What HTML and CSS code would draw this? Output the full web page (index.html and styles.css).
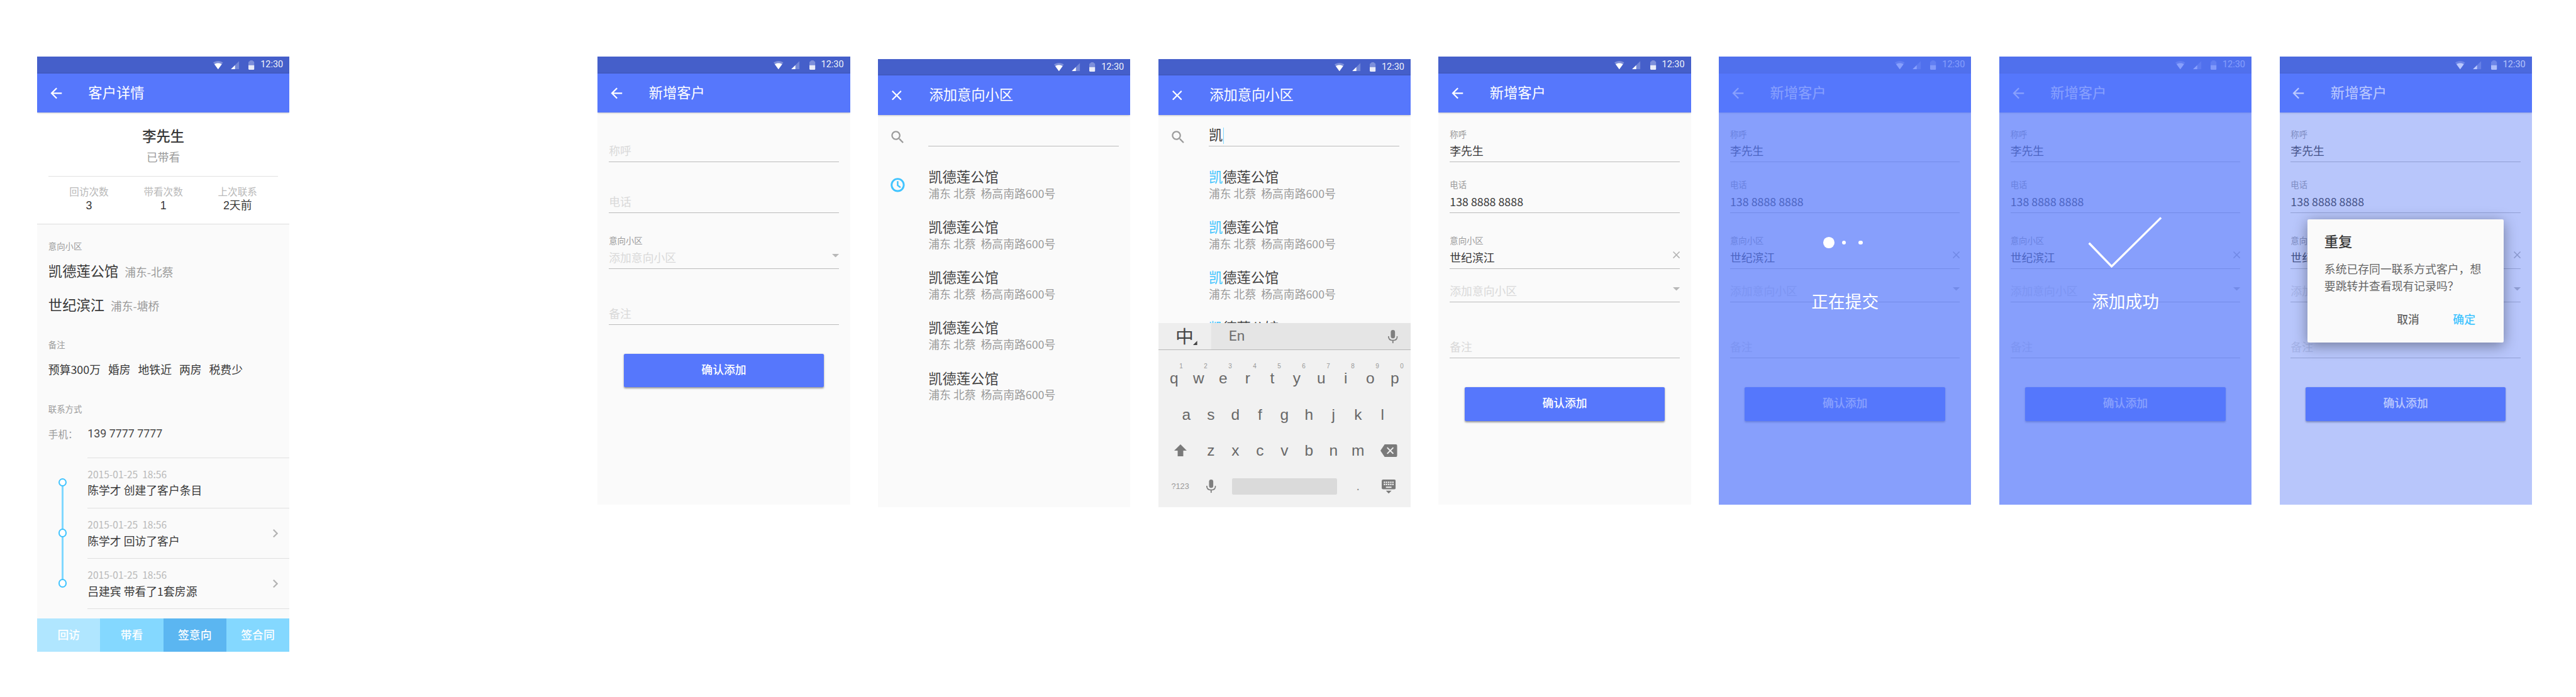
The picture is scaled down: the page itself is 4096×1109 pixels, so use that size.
FILE: index.html
```html
<!DOCTYPE html>
<html lang="zh-CN">
<head>
<meta charset="utf-8">
<title>客户管理</title>
<link rel="stylesheet" href="styles.css">
</head>
<body>
<svg class="defs" aria-hidden="true">
  <symbol id="wifi" viewBox="0 0 28 24"><path d="M14 24 0 4.5C8-1.5 20-1.5 28 4.5Z" opacity=".3"/><path d="M14 24 3.5 9.5C9 5.5 19 5.5 24.5 9.5Z"/></symbol>
  <symbol id="signal" viewBox="0 0 24 24"><path d="M0 24 24 0V24Z" opacity=".25"/><path d="M0 24 12 12V24Z"/></symbol>
  <symbol id="battery" viewBox="0 0 17 27"><path d="M0 14V6Q0 3 3 2.500L5 .5Q8.500-.5 12 .5L14 2.500Q17 3 17 6V14Z" opacity=".3"/><path d="M0 14H17V24Q17 27 14 27H3Q0 27 0 24Z" opacity=".88"/></symbol>
  <symbol id="back" viewBox="0 0 24 24"><path d="M20 11H7.830l5.590-5.590L12 4l-8 8 8 8 1.410-1.410L7.830 13H20z"/></symbol>
  <symbol id="close" viewBox="5 5 14 14"><path d="M19 6.410 17.590 5 12 10.590 6.410 5 5 6.410 10.590 12 5 17.590 6.410 19 12 13.410 17.590 19 19 17.590 13.410 12z"/></symbol>
  <symbol id="chevron" viewBox="8.590 6 7.410 12"><path d="M10 6 8.590 7.410 13.170 12l-4.580 4.590L10 18l6-6z"/></symbol>
  <symbol id="search" viewBox="0 0 24 24"><path d="M15.500 14h-.79l-.28-.27C15.410 12.590 16 11.110 16 9.500 16 5.910 13.090 3 9.500 3S3 5.910 3 9.500 5.910 16 9.500 16c1.610 0 3.090-.59 4.230-1.570l.27.28v.79l5 4.990L20.490 19l-4.990-5zm-6 0C7.010 14 5 11.990 5 9.500S7.010 5 9.500 5 14 7.010 14 9.500 11.990 14 9.500 14z"/></symbol>
  <symbol id="clock" viewBox="0 0 24 24"><circle cx="12" cy="12" r="8.700" fill="none" stroke="currentColor" stroke-width="2.600"/><path d="M12 6.500V12.500L16 15.500" fill="none" stroke="currentColor" stroke-width="2.200"/></symbol>
  <symbol id="caret" viewBox="0 0 20 10"><path d="M0 0H20L10 10Z"/></symbol>
  <symbol id="mic" viewBox="0 0 28 38"><rect x="8" width="12" height="24" rx="6"/><path d="M1.500 18C1.500 26 6.500 30 14 30S26.500 26 26.500 18M14 30V38" fill="none" stroke="currentColor" stroke-width="3.200"/></symbol>
  <symbol id="shift" viewBox="0 0 36 34"><path d="M18 0 36 18H26V34H10V18H0Z"/></symbol>
  <symbol id="erase" viewBox="0 0 48 36"><path fill-rule="evenodd" d="M12 0H44Q48 0 48 4V32Q48 36 44 36H12L0 18ZM20.500 8 18 10.500 25.500 18 18 25.500 20.500 28 28 20.500 35.500 28 38 25.500 30.500 18 38 10.500 35.500 8 28 15.500Z"/></symbol>
  <symbol id="hide" viewBox="0 0 40 40"><path fill-rule="evenodd" d="M4 0H36Q40 0 40 4V24Q40 28 36 28H4Q0 28 0 24V4Q0 0 4 0ZM6 6V10H10V6ZM12 6V10H16V6ZM18 6V10H22V6ZM24 6V10H28V6ZM30 6V10H34V6ZM6 12V16H10V12ZM12 12V16H16V12ZM18 12V16H22V12ZM24 12V16H28V12ZM30 12V16H34V12ZM12 20V24H28V20Z"/><path d="M12 32H28L20 40Z"/></symbol>
</svg>

<main class="board">

  <section class="phone phone-detail">
    <div class="status"><svg class="i-wifi"><use href="#wifi"/></svg><svg class="i-signal"><use href="#signal"/></svg><svg class="i-battery"><use href="#battery"/></svg><span>12:30</span></div>
    <header class="appbar"><svg class="i-back"><use href="#back"/></svg><h1>客户详情</h1></header>
    <div class="summary">
      <h2>李先生</h2>
      <p class="state">已带看</p>
      <dl class="stats">
        <div><dt>回访次数</dt><dd>3</dd></div>
        <div><dt>带看次数</dt><dd>1</dd></div>
        <div><dt>上次联系</dt><dd>2天前</dd></div>
      </dl>
    </div>
    <div class="info">
      <h3>意向小区</h3>
      <p class="estate">凯德莲公馆  <small>浦东-北蔡</small></p>
      <p class="estate">世纪滨江  <small>浦东-塘桥</small></p>
      <h3 class="h-note">备注</h3>
      <p class="tags">预算300万   婚房   地铁近   两房   税费少</p>
      <h3 class="h-contact">联系方式</h3>
      <p class="contact"><span>手机：</span><b>139 7777 7777</b></p>
    </div>
    <ol class="timeline">
      <li><i class="node"></i><div class="event"><time>2015-01-25  18:56</time><p>陈学才 创建了客户条目</p></div></li>
      <li><i class="node"></i><div class="event"><time>2015-01-25  18:56</time><p>陈学才 回访了客户</p><svg class="i-chevron"><use href="#chevron"/></svg></div></li>
      <li><i class="node"></i><div class="event"><time>2015-01-25  18:56</time><p>吕建宾 带看了1套房源</p><svg class="i-chevron"><use href="#chevron"/></svg></div></li>
    </ol>
    <nav class="actions"><a class="a1">回访</a><a class="a2">带看</a><a class="a3">签意向</a><a class="a2">签合同</a></nav>
  </section>

  <section class="phone">
    <div class="status"><svg class="i-wifi"><use href="#wifi"/></svg><svg class="i-signal"><use href="#signal"/></svg><svg class="i-battery"><use href="#battery"/></svg><span>12:30</span></div>
    <header class="appbar"><svg class="i-back"><use href="#back"/></svg><h1>新增客户</h1></header>
    <form class="form">
      <div class="field first"><p class="hint">称呼</p></div>
      <div class="field"><p class="hint">电话</p></div>
      <div class="field tall"><label>意向小区</label><p class="hint">添加意向小区</p><svg class="i-caret"><use href="#caret"/></svg></div>
      <div class="field tall"><p class="hint">备注</p></div>
      <div class="submit">确认添加</div>
    </form>
  </section>

  <section class="phone lowered">
    <div class="status"><svg class="i-wifi"><use href="#wifi"/></svg><svg class="i-signal"><use href="#signal"/></svg><svg class="i-battery"><use href="#battery"/></svg><span>12:30</span></div>
    <header class="appbar"><svg class="i-close"><use href="#close"/></svg><h1>添加意向小区</h1></header>
    <div class="searchbar"><svg class="i-search"><use href="#search"/></svg><div class="query"></div></div>
    <div class="results">
      <svg class="i-clock"><use href="#clock"/></svg>
      <ul>
        <li><h4>凯德莲公馆</h4><p>浦东 北蔡  杨高南路600号</p></li>
        <li><h4>凯德莲公馆</h4><p>浦东 北蔡  杨高南路600号</p></li>
        <li><h4>凯德莲公馆</h4><p>浦东 北蔡  杨高南路600号</p></li>
        <li><h4>凯德莲公馆</h4><p>浦东 北蔡  杨高南路600号</p></li>
        <li><h4>凯德莲公馆</h4><p>浦东 北蔡  杨高南路600号</p></li>
      </ul>
    </div>
  </section>

  <section class="phone lowered">
    <div class="status"><svg class="i-wifi"><use href="#wifi"/></svg><svg class="i-signal"><use href="#signal"/></svg><svg class="i-battery"><use href="#battery"/></svg><span>12:30</span></div>
    <header class="appbar"><svg class="i-close"><use href="#close"/></svg><h1>添加意向小区</h1></header>
    <div class="searchbar"><svg class="i-search"><use href="#search"/></svg><div class="query">凯<i class="cursor"></i></div></div>
    <div class="results clipped">
      <ul>
        <li><h4><em>凯</em>德莲公馆</h4><p>浦东 北蔡  杨高南路600号</p></li>
        <li><h4><em>凯</em>德莲公馆</h4><p>浦东 北蔡  杨高南路600号</p></li>
        <li><h4><em>凯</em>德莲公馆</h4><p>浦东 北蔡  杨高南路600号</p></li>
        <li><h4><em>凯</em>德莲公馆</h4></li>
      </ul>
    </div>
    <div class="keyboard">
      <div class="suggest"><span class="zh">中<i></i></span><span class="en">En</span><svg class="i-mic"><use href="#mic"/></svg></div>
      <div class="keys">
        <div class="row r1"><span>q<sup>1</sup></span><span>w<sup>2</sup></span><span>e<sup>3</sup></span><span>r<sup>4</sup></span><span>t<sup>5</sup></span><span>y<sup>6</sup></span><span>u<sup>7</sup></span><span>i<sup>8</sup></span><span>o<sup>9</sup></span><span>p<sup>0</sup></span></div>
        <div class="row"><span>a</span><span>s</span><span>d</span><span>f</span><span>g</span><span>h</span><span>j</span><span>k</span><span>l</span></div>
        <div class="row"><span class="wide"><svg class="i-shift"><use href="#shift"/></svg></span><span>z</span><span>x</span><span>c</span><span>v</span><span>b</span><span>n</span><span>m</span><span class="wide"><svg class="i-erase"><use href="#erase"/></svg></span></div>
        <div class="row"><span class="wide sym">?123</span><span><svg class="i-mic"><use href="#mic"/></svg></span><span class="space"><i></i></span><span class="dot">.</span><span class="wide"><svg class="i-hide"><use href="#hide"/></svg></span></div>
      </div>
    </div>
  </section>

  <section class="phone">
    <div class="status"><svg class="i-wifi"><use href="#wifi"/></svg><svg class="i-signal"><use href="#signal"/></svg><svg class="i-battery"><use href="#battery"/></svg><span>12:30</span></div>
    <header class="appbar"><svg class="i-back"><use href="#back"/></svg><h1>新增客户</h1></header>
    <form class="form">
      <div class="field first"><label>称呼</label><p>李先生</p></div>
      <div class="field"><label>电话</label><p>138 8888 8888</p></div>
      <div class="field tall"><label>意向小区</label><p>世纪滨江</p><svg class="i-clear"><use href="#close"/></svg></div>
      <div class="field short"><p class="hint">添加意向小区</p><svg class="i-caret"><use href="#caret"/></svg></div>
      <div class="field tall"><p class="hint">备注</p></div>
      <div class="submit">确认添加</div>
    </form>
  </section>

  <section class="phone">
    <div class="status"><svg class="i-wifi"><use href="#wifi"/></svg><svg class="i-signal"><use href="#signal"/></svg><svg class="i-battery"><use href="#battery"/></svg><span>12:30</span></div>
    <header class="appbar"><svg class="i-back"><use href="#back"/></svg><h1>新增客户</h1></header>
    <form class="form">
      <div class="field first"><label>称呼</label><p>李先生</p></div>
      <div class="field"><label>电话</label><p>138 8888 8888</p></div>
      <div class="field tall"><label>意向小区</label><p>世纪滨江</p><svg class="i-clear"><use href="#close"/></svg></div>
      <div class="field short"><p class="hint">添加意向小区</p><svg class="i-caret"><use href="#caret"/></svg></div>
      <div class="field tall"><p class="hint">备注</p></div>
      <div class="submit">确认添加</div>
    </form>
    <div class="scrim">
      <div class="figure dots"><i></i><i></i><i></i></div>
      <p>正在提交</p>
    </div>
  </section>

  <section class="phone">
    <div class="status"><svg class="i-wifi"><use href="#wifi"/></svg><svg class="i-signal"><use href="#signal"/></svg><svg class="i-battery"><use href="#battery"/></svg><span>12:30</span></div>
    <header class="appbar"><svg class="i-back"><use href="#back"/></svg><h1>新增客户</h1></header>
    <form class="form">
      <div class="field first"><label>称呼</label><p>李先生</p></div>
      <div class="field"><label>电话</label><p>138 8888 8888</p></div>
      <div class="field tall"><label>意向小区</label><p>世纪滨江</p><svg class="i-clear"><use href="#close"/></svg></div>
      <div class="field short"><p class="hint">添加意向小区</p><svg class="i-caret"><use href="#caret"/></svg></div>
      <div class="field tall"><p class="hint">备注</p></div>
      <div class="submit">确认添加</div>
    </form>
    <div class="scrim">
      <div class="figure"><svg class="i-tick" viewBox="0 0 212 148"><path d="M3 75 67.500 141.500 208.500 2.500" fill="none" stroke="#fff" stroke-width="6"/></svg></div>
      <p>添加成功</p>
    </div>
  </section>

  <section class="phone">
    <div class="status"><svg class="i-wifi"><use href="#wifi"/></svg><svg class="i-signal"><use href="#signal"/></svg><svg class="i-battery"><use href="#battery"/></svg><span>12:30</span></div>
    <header class="appbar"><svg class="i-back"><use href="#back"/></svg><h1>新增客户</h1></header>
    <form class="form">
      <div class="field first"><label>称呼</label><p>李先生</p></div>
      <div class="field"><label>电话</label><p>138 8888 8888</p></div>
      <div class="field tall"><label>意向小区</label><p>世纪滨江</p><svg class="i-clear"><use href="#close"/></svg></div>
      <div class="field short"><p class="hint">添加意向小区</p><svg class="i-caret"><use href="#caret"/></svg></div>
      <div class="field tall"><p class="hint">备注</p></div>
      <div class="submit">确认添加</div>
    </form>
    <div class="scrim light">
      <div class="dialog">
        <h2>重复</h2>
        <p>系统已存同一联系方式客户，想要跳转并查看现有记录吗？</p>
        <div class="buttons"><span>取消</span><span class="ok">确定</span></div>
      </div>
    </div>
  </section>

</main>
</body>
</html>
```
FILE: styles.css
```css
/* 1rem is 100 design pixels; a phone is 720 design pixels wide */
html { font-size: 55.7128px; }
* { box-sizing: border-box; margin: 0; padding: 0; }
body {
  height: 100vh;
  overflow: hidden;
  background: #fff;
  color: #383838;
  font-family: "Noto Sans CJK SC", "Noto Sans", sans-serif;
  font-size: .32rem;
}
h1, h2, h3, h4 { font-weight: 400; }
ul, ol { list-style: none; }
i, em { font-style: normal; }
svg { display: block; flex: none; fill: currentColor; overflow: visible; }
.defs { position: absolute; width: 0; height: 0; }

.board {
  display: flex;
  align-items: flex-start;
  gap: .8rem;
  padding: 1.62rem 0 0 1.06rem;
}
.phone {
  position: relative;
  flex: none;
  display: flex;
  flex-direction: column;
  width: 7.2rem;
  height: 12.8rem;
  background: #fafafa;
  overflow: hidden;
}
.phone-detail { height: 17rem; margin-right: 8rem; }
.lowered { margin-top: .06rem; }

/* status bar and app bar */
.status {
  flex: none;
  display: flex;
  justify-content: flex-end;
  align-items: center;
  height: .48rem;
  padding-right: .18rem;
  background: #455fca;
  color: #fff;
  font: .26rem/.48rem Roboto, sans-serif;
}
.status span { opacity: .92; }
.i-wifi { width: .28rem; height: .24rem; margin-right: .22rem; }
.i-signal { width: .24rem; height: .24rem; margin-right: .27rem; }
.i-battery { width: .17rem; height: .27rem; margin-right: .17rem; }
.appbar {
  flex: none;
  display: flex;
  align-items: center;
  height: 1.12rem;
  background: #5677fc;
  color: #fff;
  box-shadow: 0 .02rem .06rem rgba(0, 0, 0, .38);
  z-index: 1;
}
.appbar h1 { font-size: .4rem; line-height: .6rem; margin-bottom: .07rem; }
.i-back { width: .48rem; height: .48rem; margin: 0 .68rem 0 .3rem; }
.i-close { width: .28rem; height: .28rem; margin: 0 .78rem 0 .4rem; }

/* customer detail */
.summary {
  flex: none;
  height: 3.19rem;
  padding-top: .36rem;
  background: #fff;
  border-bottom: 1px solid #dcdcdc;
  text-align: center;
}
.summary h2 { font-size: .4rem; font-weight: 500; line-height: .6rem; }
.state { margin-top: .08rem; line-height: .44rem; color: #9b9b9b; }
.stats {
  display: grid;
  grid-template-columns: repeat(3, 2.12rem);
  margin: .32rem .32rem 0;
  padding: .22rem 0 0 .1rem;
  border-top: 1px solid #e2e2e2;
}
.stats dt { font-size: .28rem; line-height: .42rem; color: #b9b9b9; }
.stats dd { font-family: "Liberation Sans", "Noto Sans CJK SC", sans-serif; line-height: .4rem; }
.info { flex: none; height: 6.65rem; padding: .47rem .32rem 0; }
.info h3 { font-size: .24rem; line-height: .32rem; color: #9b9b9b; }
.estate { height: .98rem; font-size: .4rem; line-height: .98rem; white-space: pre; }
.info h3 + .estate { margin-top: .03rem; }
.estate small { font-size: .32rem; line-height: 0; color: #9b9b9b; }
.info .h-note { margin-top: .5rem; }
.tags { margin-top: .3rem; line-height: .48rem; white-space: pre; }
.info .h-contact { margin-top: .73rem; }
.contact { display: flex; align-items: center; margin-top: .31rem; line-height: .48rem; }
.contact span { width: 1.12rem; font-size: .28rem; color: #9b9b9b; }
.contact b { font: 400 .32rem/.48rem Roboto, sans-serif; color: #484848; }

.timeline { flex: none; height: 4.6rem; }
.timeline li { position: relative; display: flex; align-items: center; height: 1.44rem; }
.timeline li:not(:last-child)::before {
  content: "";
  position: absolute;
  left: .695rem;
  top: .72rem;
  width: .06rem;
  height: 1.44rem;
  background: #80d8ff;
}
.node {
  position: relative;
  z-index: 1;
  width: .24rem;
  height: .24rem;
  margin: 0 .595rem 0 .605rem;
  border: .04rem solid #40c4ff;
  border-radius: 50%;
  background: #fff;
}
.event {
  position: relative;
  flex: 1;
  height: 1.44rem;
  padding-top: .24rem;
  border-top: 1px solid #e0e0e0;
  white-space: pre;
}
.timeline li:last-child .event { height: 1.45rem; border-bottom: 1px solid #e0e0e0; }
.event time { display: block; font-size: .28rem; line-height: .44rem; color: #b9b9b9; }
.event p { line-height: .5rem; }
.i-chevron { position: absolute; right: .32rem; top: .6rem; width: .148rem; height: .24rem; color: #b3b3b3; }
.actions { display: flex; height: .96rem; margin-top: auto; }
.actions a {
  flex: 1;
  color: #fff;
  font-weight: 500;
  line-height: .93rem;
  text-align: center;
}
.a1 { background: #b0e6ff; }
.a2 { background: #84d8ff; }
.a3 { background: #5bb6f1; }

/* form */
.field {
  position: relative;
  display: flex;
  flex-direction: column;
  justify-content: flex-end;
  height: 1.44rem;
  margin: 0 .32rem;
  padding-bottom: .1rem;
  border-bottom: .02rem solid #bbb;
}
.field.first { height: 1.42rem; }
.field.tall { height: 1.6rem; }
.field.short { height: .96rem; }
.field label { font-size: .24rem; line-height: .32rem; margin-bottom: .08rem; color: #9b9b9b; }
.field p { line-height: .44rem; }
.field .hint { color: #d9d9d9; }
.i-caret { position: absolute; right: 0; bottom: .31rem; width: .2rem; height: .1rem; color: #b8b8b8; }
.i-clear { position: absolute; right: 0; bottom: .275rem; width: .2rem; height: .2rem; color: #b3b3b3; }
.submit {
  height: .96rem;
  margin: .82rem .74rem 0;
  border-radius: .04rem;
  background: #5677fc;
  box-shadow: 0 .02rem .05rem rgba(0, 0, 0, .38);
  color: #fff;
  font-weight: 500;
  line-height: .89rem;
  text-align: center;
}

/* search */
.searchbar { display: flex; height: .91rem; padding: 0 .32rem; flex: none; }
.i-search { width: .48rem; height: .48rem; margin: .4rem .64rem 0 .01rem; color: #9b9b9b; }
.query {
  flex: 1;
  display: flex;
  padding-top: .28rem;
  border-bottom: .02rem solid #bbb;
  font-size: .4rem;
  line-height: .56rem;
}
.searchbar .query { margin-left: -.01rem; }
.cursor { width: .02rem; height: .48rem; margin: .08rem 0 0 .02rem; background: #80d8ff; }
.results { flex: none; display: flex; padding: .37rem 0 0 .32rem; }
.i-clock { width: .48rem; height: .48rem; margin: .48rem -.48rem 0 0; color: #40c4ff; }
.results ul { margin-left: 1.12rem; }
.results li { height: 1.44rem; padding-top: .23rem; white-space: pre; }
.results h4 { font-size: .4rem; line-height: .48rem; color: #444; }
.results em { color: #40c4ff; }
.results p { line-height: .5rem; color: #9b9b9b; }
.clipped { height: 5.04rem; overflow: hidden; }

/* keyboard */
.keyboard { flex: 1; display: flex; flex-direction: column; background: #f1f1f1; color: #686868; }
.suggest {
  display: flex;
  align-items: center;
  height: .77rem;
  padding-right: .37rem;
  background: #e5e5e5;
  border-bottom: .02rem solid #b8b8b8;
}
.zh {
  display: flex;
  align-items: center;
  align-self: stretch;
  width: 1.52rem;
  padding: 0 0 .04rem .49rem;
  background: #eee;
  color: #444;
  font-size: .52rem;
  line-height: .6rem;
}
.zh i {
  width: .12rem;
  height: .12rem;
  margin: .42rem 0 0 -.02rem;
  background: #444;
  clip-path: polygon(100% 0, 100% 100%, 0 100%);
}
.en { flex: 1; padding-left: .49rem; font: .41rem/.6rem Roboto, sans-serif; color: #6e6e6e; }
.i-mic { width: .28rem; height: .38rem; color: #7f7f7f; }
.keys { padding-top: .29rem; font: .44rem/1.03rem "Liberation Sans", sans-serif; }
.row { display: flex; justify-content: center; height: 1.03rem; }
.row span { position: relative; display: flex; justify-content: center; align-items: center; width: .7rem; }
.row sup { position: absolute; left: .5rem; top: .04rem; font-size: .18rem; line-height: .3rem; color: #999; }
.row .wide { width: 1.05rem; color: #7a7a7a; }
.row .sym { font-size: .23rem; color: #999; }
.row .dot { font-size: .36rem; color: #8a8a8a; }
.row .space { width: 3.5rem; }
.space i { width: 3rem; height: .48rem; border-radius: .04rem; background: #dadada; }
.i-shift { width: .36rem; height: .34rem; }
.i-erase { width: .48rem; height: .36rem; }
.i-hide { width: .4rem; height: .4rem; }

/* overlays */
.scrim {
  position: absolute;
  inset: 0;
  z-index: 2;
  padding-top: 4.57rem;
  background: rgba(86, 119, 252, .7);
  color: #fff;
  font-size: .48rem;
  line-height: .72rem;
  text-align: center;
}
.scrim.light { padding-top: 4.64rem; background: rgba(86, 119, 252, .4); }
.figure { display: flex; height: 1.48rem; margin-bottom: .575rem; }
.dots { align-items: center; padding-left: 2.98rem; }
.dots i { width: .12rem; height: .12rem; margin-left: .36rem; border-radius: 50%; background: #fff; }
.dots i:first-child { width: .32rem; height: .32rem; margin: 0 -.15rem 0 0; }
.i-tick { width: 2.12rem; height: 1.48rem; margin-left: 2.54rem; }
.dialog {
  width: 5.6rem;
  height: 3.52rem;
  margin-left: .8rem;
  padding: .34rem .48rem 0;
  border-radius: .04rem;
  background: #fafafa;
  box-shadow: 0 .08rem .4rem rgba(0, 0, 0, .38);
  color: #666;
  font-size: .32rem;
  line-height: .48rem;
  text-align: left;
}
.dialog h2 { font-size: .4rem; font-weight: 500; line-height: .56rem; color: #383838; }
.dialog p { width: 4.7rem; margin-top: .27rem; line-height: .48rem; }
.buttons { display: flex; justify-content: flex-end; gap: .96rem; margin-top: .47rem; padding-right: .33rem; font-weight: 500; }
.buttons .ok { color: #40c4ff; }
```
